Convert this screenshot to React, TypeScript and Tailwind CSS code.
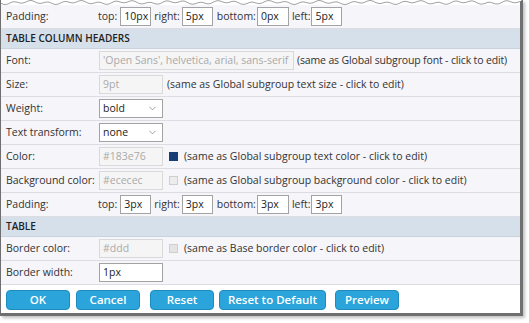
import { ChevronDown } from "lucide-react";

const font = { fontFamily: '"Open Sans", "Liberation Sans", sans-serif' };

function Row({ label, children }: { label: string; children?: React.ReactNode }) {
  return (
    <div className="flex h-[24px] items-center border-b border-[#dcdce2] bg-[#f5f5fa] pl-[5px]">
      <div className="w-[93px] shrink-0 whitespace-nowrap text-[10.5px] text-[#333]">{label}</div>
      {children}
    </div>
  );
}

function Header({ title }: { title: string }) {
  return (
    <div className="flex h-[20px] items-center border-b border-[#c9d3dd] bg-[#d5e0ea] pl-[5px] text-[10px] font-semibold text-[#222]">
      {title}
    </div>
  );
}

function Disabled({ value, width = "w-[64px]" }: { value: string; width?: string }) {
  return (
    <div
      className={`flex h-[19px] ${width} items-center overflow-hidden whitespace-nowrap border border-[#d9d9d9] bg-[#f5f5f5] px-[3px] text-[10.5px] text-[#aaa]`}
    >
      {value}
    </div>
  );
}

function Field({ value, width = "w-[64px]" }: { value: string; width?: string }) {
  return (
    <div
      className={`flex h-[19px] ${width} items-center border border-[#a3a3a3] bg-white px-[3px] text-[10.5px] text-[#222]`}
    >
      {value}
    </div>
  );
}

function Select({ value }: { value: string }) {
  return (
    <div className="flex h-[19px] w-[64px] items-center justify-between border border-[#a3a3a3] bg-white pl-[3px] pr-[4px] text-[10.5px] text-[#222]">
      <span>{value}</span>
      <ChevronDown size={11} strokeWidth={1.5} className="text-[#777]" />
    </div>
  );
}

function Note({ text, className = "ml-[4px]" }: { text: string; className?: string }) {
  return <span className={`${className} whitespace-nowrap text-[10.5px] text-[#333]`}>{text}</span>;
}

function Swatch({ color, border }: { color: string; border: string }) {
  return <span className={`ml-[6px] h-[9px] w-[9px] ${color} border ${border}`} />;
}

function PaddingFields({ top, right, bottom, left }: { top: string; right: string; bottom: string; left: string }) {
  return (
    <div className="-ml-[1px] flex items-center text-[10.5px] text-[#333]">
      <span>top:</span>
      <span className="ml-[3px]"><Field value={top} width="w-[31px]" /></span>
      <span className="ml-[3px]">right:</span>
      <span className="ml-[2px]"><Field value={right} width="w-[31px]" /></span>
      <span className="ml-[4px]">bottom:</span>
      <span className="ml-[1px]"><Field value={bottom} width="w-[32px]" /></span>
      <span className="ml-[3px]">left:</span>
      <span className="ml-[1px]"><Field value={left} width="w-[31px]" /></span>
    </div>
  );
}

function Button({ label, className = "" }: { label: string; className?: string }) {
  return (
    <button
      className={`h-[20px] rounded-[4px] border border-[#1f8cc0] bg-[#2aa4da] text-[11.5px] font-semibold text-white ${className}`}
    >
      {label}
    </button>
  );
}

function TornEdge() {
  const pts: string[] = [];
  for (let x = 0; x <= 521; x += 3) {
    const y = 2.5 + Math.sin(x * 0.37) * 1.2 + Math.sin(x * 0.13 + 1) * 0.9;
    pts.push(`${x},${y.toFixed(1)}`);
  }
  const line = pts.join(" L");
  return (
    <svg width="521" height="5" className="block">
      <path d={`M0,0 L${line} L521,0 Z`} fill="#ffffff" />
      <path d={`M${line}`} fill="none" stroke="#8a8a8a" strokeWidth="0.8" />
    </svg>
  );
}

export default function App() {
  return (
    <div className="h-[323px] w-[529px] bg-white" style={font}>
      <div className="w-[523px] border-b-[3px] border-l border-r-[3px] border-[#6f6f6f] bg-[#f5f5fa] shadow-[2px_2px_3px_rgba(0,0,0,0.25)]">
        <div className="bg-white">
          <TornEdge />
        </div>
        <Row label="Padding:">
          <PaddingFields top="10px" right="5px" bottom="0px" left="5px" />
        </Row>
        <Header title="TABLE COLUMN HEADERS" />
        <Row label="Font:">
          <Disabled value="'Open Sans', helvetica, arial, sans-serif" width="w-[195px]" />
          <Note text="(same as Global subgroup font - click to edit)" className="ml-[3px] tracking-[-0.15px]" />
        </Row>
        <Row label="Size:">
          <Disabled value="9pt" />
          <Note text="(same as Global subgroup text size - click to edit)" />
        </Row>
        <Row label="Weight:">
          <Select value="bold" />
        </Row>
        <Row label="Text transform:">
          <Select value="none" />
        </Row>
        <Row label="Color:">
          <Disabled value="#183e76" />
          <Swatch color="bg-[#183e76]" border="border-[#183e76]" />
          <Note text="(same as Global subgroup text color - click to edit)" className="ml-[6px]" />
        </Row>
        <Row label="Background color:">
          <Disabled value="#ececec" />
          <Swatch color="bg-[#ececec]" border="border-[#cfcfcf]" />
          <Note text="(same as Global subgroup background color - click to edit)" className="ml-[6px]" />
        </Row>
        <Row label="Padding:">
          <PaddingFields top="3px" right="3px" bottom="3px" left="3px" />
        </Row>
        <Header title="TABLE" />
        <Row label="Border color:">
          <Disabled value="#ddd" />
          <Swatch color="bg-[#e4e4e4]" border="border-[#cfcfcf]" />
          <Note text="(same as Base border color - click to edit)" className="ml-[6px]" />
        </Row>
        <Row label="Border width:">
          <Field value="1px" />
        </Row>
        <div className="flex h-[28px] items-start bg-white pl-[5px] pt-[5px]">
          <Button label="OK" className="w-[64px]" />
          <Button label="Cancel" className="ml-[6px] w-[64px]" />
          <Button label="Reset" className="ml-[10px] w-[64px]" />
          <Button label="Reset to Default" className="ml-[5px] w-[107px]" />
          <Button label="Preview" className="ml-[9px] w-[64px]" />
        </div>
      </div>
    </div>
  );
}
